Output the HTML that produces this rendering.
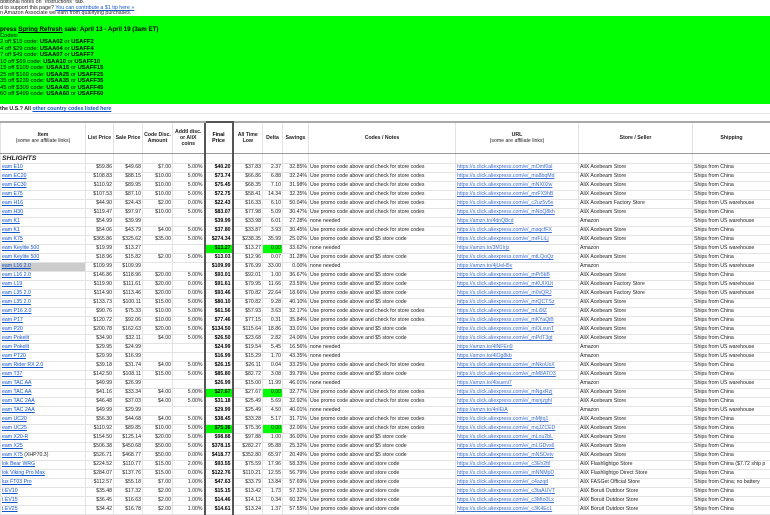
<!DOCTYPE html>
<html><head><meta charset="utf-8"><style>
*{margin:0;padding:0;box-sizing:border-box}
body{width:770px;height:515px;overflow:hidden;background:#fff;font-family:"Liberation Sans",Arial,sans-serif;color:#222;position:relative}
.t{position:absolute;left:0;font-size:5.3px;white-space:nowrap;line-height:6px}
a{color:#1155cc;text-decoration:underline}
#g{position:absolute;left:0;top:16px;width:770px;height:88px;background:#00ff00;font-size:5.8px;line-height:6.45px;color:#000}
#g div{white-space:nowrap}
.gr{position:absolute;left:0;width:770px;height:1px;background:#e3e3e3}
table{position:absolute;left:0;top:121px;border-collapse:collapse;table-layout:fixed;width:770px;font-size:5.2px}
td{border:1px solid #e3e3e3;height:9px;padding:0 1px;white-space:nowrap;overflow:hidden;line-height:7px}
tr.h td{height:31px;font-weight:bold;text-align:center;border-top:2px solid #aaa;border-bottom:1px solid #999;line-height:6px;white-space:normal}
tr.s td{height:10px;font-weight:bold;font-style:italic;font-size:6.8px}
td.r{text-align:right}
td.f{border-left:2px solid #555;border-right:2px solid #555;text-align:right;font-weight:bold;color:#000}
tr.h td.f{border-top:2px solid #555}
.gn{background:#00ff00}
.gy{background:#ccc}
td.u a{color:#3b6fd1}
.sm{font-weight:normal}
</style></head><body>
<div class="t" style="top:-1px">dditional notes on "Instructions" tab.</div>
<div class="t" style="top:5px">d to support this page? <a>You can contribute a $1 tip here »</a></div>
<div class="t" style="top:10px">n Amazon Associate we earn from qualifying purchases.</div>
<div id="g">
<div style="margin-top:10px;font-weight:bold;font-size:6.2px;line-height:7px">press <u>Spring Refresh</u> sale: April 13 - April 19 (3am ET)</div>
<div>Codes:</div>
<div>2 off $15 code: <b>USAA02</b> or <b>USAFF2</b></div>
<div>4 off $29 code: <b>USAA04</b> or <b>USAFF4</b></div>
<div>7 off $49 code: <b>USAA07</b> or <b>USAFF7</b></div>
<div>10 off $69 code: <b>USAA10</b> or <b>USAFF10</b></div>
<div>15 off $109 code: <b>USAA15</b> or <b>USAFF15</b></div>
<div>25 off $169 code: <b>USAA25</b> or <b>USAFF25</b></div>
<div>35 off $239 code: <b>USAA35</b> or <b>USAFF35</b></div>
<div>45 off $309 code: <b>USAA45</b> or <b>USAFF45</b></div>
<div>60 off $499 code: <b>USAA60</b> or <b>USAFF60</b></div>
</div>
<div class="t" style="top:106px;font-weight:bold">the U.S.? All <a>other country codes listed here</a></div>
<div class="gr" style="top:113px"></div>
<table>
<colgroup><col style="width:85px"><col style="width:28px"><col style="width:29px"><col style="width:30px"><col style="width:32px"><col style="width:28px"><col style="width:30px"><col style="width:20px"><col style="width:26px"><col style="width:147px"><col style="width:123px"><col style="width:114px"><col style="width:78px"></colgroup>
<tr class="h"><td>Item<br><span class="sm">(some are affiliate links)</span></td><td>List Price</td><td>Sale Price</td><td>Code Disc. Amount</td><td>Addtl disc. or AliX coins</td><td class="f">Final Price</td><td>All Time Low</td><td>Delta</td><td>Savings</td><td>Codes / Notes</td><td>URL<br><span class="sm">(some are affiliate links)</span></td><td>Store / Seller</td><td>Shipping</td></tr>
<tr class="s"><td>SHLIGHTS</td><td></td><td></td><td></td><td></td><td class="f"></td><td></td><td></td><td></td><td></td><td></td><td></td><td></td></tr>
<tr><td><a>eam E10</a></td><td class="r">$59.86</td><td class="r">$49.68</td><td class="r">$7.00</td><td class="r">5.00%</td><td class="f">$40.20</td><td class="r">$37.83</td><td class="r">2.37</td><td class="r">32.85%</td><td>Use promo code above and check for store codes</td><td class="u"><a>https://s.click.aliexpress.com/e/_mOmf0al</a></td><td>AliX Acebeam Store</td><td>Ships from China</td></tr>
<tr><td><a>eam EC20</a></td><td class="r">$108.83</td><td class="r">$88.15</td><td class="r">$10.00</td><td class="r">5.00%</td><td class="f">$73.74</td><td class="r">$66.86</td><td class="r">6.88</td><td class="r">32.24%</td><td>Use promo code above and check for store codes</td><td class="u"><a>https://s.click.aliexpress.com/e/_ma8bqMd</a></td><td>AliX Acebeam Store</td><td>Ships from China</td></tr>
<tr><td><a>eam EC30</a></td><td class="r">$110.92</td><td class="r">$89.95</td><td class="r">$10.00</td><td class="r">5.00%</td><td class="f">$75.45</td><td class="r">$68.35</td><td class="r">7.10</td><td class="r">31.98%</td><td>Use promo code above and check for store codes</td><td class="u"><a>https://s.click.aliexpress.com/e/_mNX02w</a></td><td>AliX Acebeam Store</td><td>Ships from China</td></tr>
<tr><td><a>eam E75</a></td><td class="r">$107.53</td><td class="r">$87.10</td><td class="r">$10.00</td><td class="r">5.00%</td><td class="f">$72.75</td><td class="r">$58.41</td><td class="r">14.34</td><td class="r">32.35%</td><td>Use promo code above and check for store codes</td><td class="u"><a>https://s.click.aliexpress.com/e/_mrFX9hB</a></td><td>AliX Acebeam Store</td><td>Ships from China</td></tr>
<tr><td><a>eam H16</a></td><td class="r">$44.90</td><td class="r">$24.43</td><td class="r">$2.00</td><td class="r">0.00%</td><td class="f">$22.43</td><td class="r">$16.33</td><td class="r">6.10</td><td class="r">50.04%</td><td>Use promo code above and check for store codes</td><td class="u"><a>https://s.click.aliexpress.com/e/_c2uz5v5x</a></td><td>AliX Acebeam Factory Store</td><td>Ships from US warehouse</td></tr>
<tr><td><a>eam H30</a></td><td class="r">$119.47</td><td class="r">$97.97</td><td class="r">$10.00</td><td class="r">5.00%</td><td class="f">$83.07</td><td class="r">$77.98</td><td class="r">5.09</td><td class="r">30.47%</td><td>Use promo code above and check for store codes</td><td class="u"><a>https://s.click.aliexpress.com/e/_mNoQ8kh</a></td><td>AliX Acebeam Store</td><td>Ships from China</td></tr>
<tr><td><a>eam K1</a></td><td class="r">$54.99</td><td class="r">$39.99</td><td></td><td></td><td class="f">$39.99</td><td class="r">$33.98</td><td class="r">6.01</td><td class="r">27.28%</td><td>none needed</td><td class="u"><a>https://amzn.to/4dnQ8cd</a></td><td>Amazon</td><td>Ships from US warehouse</td></tr>
<tr><td><a>eam K1</a></td><td class="r">$54.06</td><td class="r">$43.79</td><td class="r">$4.00</td><td class="r">5.00%</td><td class="f">$37.80</td><td class="r">$33.87</td><td class="r">3.93</td><td class="r">30.45%</td><td>Use promo code above and check for store codes</td><td class="u"><a>https://s.click.aliexpress.com/e/_msqcfFX</a></td><td>AliX Acebeam Store</td><td>Ships from China</td></tr>
<tr><td><a>eam K75</a></td><td class="r">$365.86</td><td class="r">$325.62</td><td class="r">$35.00</td><td class="r">5.00%</td><td class="f">$274.34</td><td class="r">$238.35</td><td class="r">35.99</td><td class="r">25.02%</td><td>Use promo code above and $5 store code</td><td class="u"><a>https://s.click.aliexpress.com/e/_mrFLiLj</a></td><td>AliX Acebeam Store</td><td>Ships from China</td></tr>
<tr><td><a>eam Keylite 500</a></td><td class="r">$19.99</td><td class="r">$13.27</td><td></td><td></td><td class="f gn">$13.27</td><td class="r">$13.27</td><td class="r gn">0.00</td><td class="r">33.62%</td><td>none needed</td><td class="u"><a>https://amzn.to/3M1Irjz</a></td><td>Amazon</td><td>Ships from US warehouse</td></tr>
<tr><td><a>eam Keylite 500</a></td><td class="r">$18.96</td><td class="r">$15.82</td><td class="r">$2.00</td><td class="r">5.00%</td><td class="f">$13.03</td><td class="r">$12.96</td><td class="r">0.07</td><td class="r">31.28%</td><td>Use promo code above and $5 store code</td><td class="u"><a>https://s.click.aliexpress.com/e/_mtLQoQz</a></td><td>AliX Acebeam Store</td><td>Ships from China</td></tr>
<tr><td class="gy"><a>eam L16 2.0</a></td><td class="r">$109.99</td><td class="r">$109.99</td><td></td><td></td><td class="f">$109.99</td><td class="r">$76.99</td><td class="r">33.00</td><td class="r">0.00%</td><td>none needed</td><td class="u"><a>https://amzn.to/4jUeH5v</a></td><td>Amazon</td><td>Ships from US warehouse</td></tr>
<tr><td><a>eam L16 2.0</a></td><td class="r">$146.86</td><td class="r">$118.96</td><td class="r">$20.00</td><td class="r">5.00%</td><td class="f">$93.01</td><td class="r">$92.01</td><td class="r">1.00</td><td class="r">36.67%</td><td>Use promo code above and $5 store code</td><td class="u"><a>https://s.click.aliexpress.com/e/_mPr5kB</a></td><td>AliX Acebeam Store</td><td>Ships from China</td></tr>
<tr><td><a>eam L19</a></td><td class="r">$119.90</td><td class="r">$111.61</td><td class="r">$20.00</td><td class="r">0.00%</td><td class="f">$91.61</td><td class="r">$79.95</td><td class="r">11.66</td><td class="r">23.59%</td><td>Use promo code above and $5 store code</td><td class="u"><a>https://s.click.aliexpress.com/e/_mKUIXUt</a></td><td>AliX Acebeam Factory Store</td><td>Ships from US warehouse</td></tr>
<tr><td><a>eam L35 2.0</a></td><td class="r">$114.90</td><td class="r">$113.46</td><td class="r">$20.00</td><td class="r">0.00%</td><td class="f">$93.46</td><td class="r">$70.82</td><td class="r">22.64</td><td class="r">18.66%</td><td>Use promo code above and $5 store code</td><td class="u"><a>https://s.click.aliexpress.com/e/_m0vQRJ</a></td><td>AliX Acebeam Factory Store</td><td>Ships from US warehouse</td></tr>
<tr><td><a>eam L35 2.0</a></td><td class="r">$133.73</td><td class="r">$100.11</td><td class="r">$15.00</td><td class="r">5.00%</td><td class="f">$80.10</td><td class="r">$70.82</td><td class="r">9.28</td><td class="r">40.10%</td><td>Use promo code above and $5 store code</td><td class="u"><a>https://s.click.aliexpress.com/e/_mrQCTSz</a></td><td>AliX Acebeam Store</td><td>Ships from China</td></tr>
<tr><td><a>eam P16 2.0</a></td><td class="r">$90.76</td><td class="r">$75.33</td><td class="r">$10.00</td><td class="r">5.00%</td><td class="f">$61.56</td><td class="r">$57.93</td><td class="r">3.63</td><td class="r">32.17%</td><td>Use promo code above and check for store codes</td><td class="u"><a>https://s.click.aliexpress.com/e/_mLi9lZ</a></td><td>AliX Acebeam Store</td><td>Ships from China</td></tr>
<tr><td><a>eam P17</a></td><td class="r">$120.72</td><td class="r">$92.06</td><td class="r">$10.00</td><td class="r">5.00%</td><td class="f">$77.46</td><td class="r">$77.15</td><td class="r">0.31</td><td class="r">35.84%</td><td>Use promo code above and check for store codes</td><td class="u"><a>https://s.click.aliexpress.com/e/_mKYaQiB</a></td><td>AliX Acebeam Store</td><td>Ships from China</td></tr>
<tr><td><a>eam P20</a></td><td class="r">$200.78</td><td class="r">$162.63</td><td class="r">$20.00</td><td class="r">5.00%</td><td class="f">$134.50</td><td class="r">$115.64</td><td class="r">18.86</td><td class="r">33.01%</td><td>Use promo code above and $5 store code</td><td class="u"><a>https://s.click.aliexpress.com/e/_mOLxunT</a></td><td>AliX Acebeam Store</td><td>Ships from China</td></tr>
<tr><td><a>eam Pokelit</a></td><td class="r">$34.90</td><td class="r">$32.11</td><td class="r">$4.00</td><td class="r">5.00%</td><td class="f">$26.50</td><td class="r">$23.68</td><td class="r">2.82</td><td class="r">24.06%</td><td>Use promo code above and $5 store code</td><td class="u"><a>https://s.click.aliexpress.com/e/_mPdT3gt</a></td><td>AliX Acebeam Store</td><td>Ships from China</td></tr>
<tr><td><a>eam Pokelit</a></td><td class="r">$29.95</td><td class="r">$24.99</td><td></td><td></td><td class="f">$24.99</td><td class="r">$19.54</td><td class="r">5.45</td><td class="r">16.56%</td><td>none needed</td><td class="u"><a>https://amzn.to/4lNFEn9</a></td><td>Amazon</td><td>Ships from US warehouse</td></tr>
<tr><td><a>eam PT20</a></td><td class="r">$29.99</td><td class="r">$16.99</td><td></td><td></td><td class="f">$16.99</td><td class="r">$15.29</td><td class="r">1.70</td><td class="r">43.35%</td><td>none needed</td><td class="u"><a>https://amzn.to/4lOg8kb</a></td><td>Amazon</td><td>Ships from US warehouse</td></tr>
<tr><td><a>eam Rider RX 2.0</a></td><td class="r">$39.18</td><td class="r">$31.74</td><td class="r">$4.00</td><td class="r">5.00%</td><td class="f">$26.15</td><td class="r">$26.11</td><td class="r">0.04</td><td class="r">33.25%</td><td>Use promo code above and check for store codes</td><td class="u"><a>https://s.click.aliexpress.com/e/_mNkoUsX</a></td><td>AliX Acebeam Store</td><td>Ships from China</td></tr>
<tr><td><a>eam T37</a></td><td class="r">$142.50</td><td class="r">$108.11</td><td class="r">$15.00</td><td class="r">5.00%</td><td class="f">$85.80</td><td class="r">$82.72</td><td class="r">3.08</td><td class="r">39.79%</td><td>Use promo code above and $5 store code</td><td class="u"><a>https://s.click.aliexpress.com/e/_mM8ATD3</a></td><td>AliX Acebeam Store</td><td>Ships from China</td></tr>
<tr><td><a>eam TAC AA</a></td><td class="r">$49.99</td><td class="r">$26.99</td><td></td><td></td><td class="f">$26.99</td><td class="r">$15.00</td><td class="r">11.99</td><td class="r">46.01%</td><td>none needed</td><td class="u"><a>https://amzn.to/4lsueni7</a></td><td>Amazon</td><td>Ships from US warehouse</td></tr>
<tr><td><a>eam TAC AA</a></td><td class="r">$41.16</td><td class="r">$33.34</td><td class="r">$4.00</td><td class="r">5.00%</td><td class="f gn">$27.67</td><td class="r">$27.67</td><td class="r gn">0.00</td><td class="r">32.77%</td><td>Use promo code above and check for store codes</td><td class="u"><a>https://s.click.aliexpress.com/e/_mNgxRzj</a></td><td>AliX Acebeam Store</td><td>Ships from China</td></tr>
<tr><td><a>eam TAC 2AA</a></td><td class="r">$46.48</td><td class="r">$37.03</td><td class="r">$4.00</td><td class="r">5.00%</td><td class="f">$31.18</td><td class="r">$25.49</td><td class="r">5.69</td><td class="r">32.92%</td><td>Use promo code above and check for store codes</td><td class="u"><a>https://s.click.aliexpress.com/e/_msnjzghl</a></td><td>AliX Acebeam Store</td><td>Ships from China</td></tr>
<tr><td><a>eam TAC 2AA</a></td><td class="r">$49.99</td><td class="r">$29.99</td><td></td><td></td><td class="f">$29.99</td><td class="r">$25.49</td><td class="r">4.50</td><td class="r">40.01%</td><td>none needed</td><td class="u"><a>https://amzn.to/4nIEiA</a></td><td>Amazon</td><td>Ships from US warehouse</td></tr>
<tr><td><a>eam UC20</a></td><td class="r">$56.30</td><td class="r">$44.68</td><td class="r">$4.00</td><td class="r">5.00%</td><td class="f">$38.45</td><td class="r">$33.28</td><td class="r">5.17</td><td class="r">31.71%</td><td>Use promo code above and check for store codes</td><td class="u"><a>https://s.click.aliexpress.com/e/_mMjtq1</a></td><td>AliX Acebeam Store</td><td>Ships from China</td></tr>
<tr><td><a>eam UC25</a></td><td class="r">$110.92</td><td class="r">$89.85</td><td class="r">$10.00</td><td class="r">5.00%</td><td class="f gn">$75.36</td><td class="r">$75.36</td><td class="r gn">0.00</td><td class="r">32.06%</td><td>Use promo code above and check for store codes</td><td class="u"><a>https://s.click.aliexpress.com/e/_mqJZCED</a></td><td>AliX Acebeam Store</td><td>Ships from China</td></tr>
<tr><td><a>eam X20-R</a></td><td class="r">$154.50</td><td class="r">$125.14</td><td class="r">$20.00</td><td class="r">5.00%</td><td class="f">$98.88</td><td class="r">$97.88</td><td class="r">1.00</td><td class="r">36.00%</td><td>Use promo code above and $5 store code</td><td class="u"><a>https://s.click.aliexpress.com/e/_mLou2bL</a></td><td>AliX Acebeam Store</td><td>Ships from China</td></tr>
<tr><td><a>eam X25</a></td><td class="r">$506.38</td><td class="r">$450.68</td><td class="r">$50.00</td><td class="r">5.00%</td><td class="f">$378.15</td><td class="r">$282.27</td><td class="r">95.88</td><td class="r">25.32%</td><td>Use promo code above and $5 store code</td><td class="u"><a>https://s.click.aliexpress.com/e/_mLGDvs6</a></td><td>AliX Acebeam Store</td><td>Ships from China</td></tr>
<tr><td><a>eam X75</a> (XHP70.3)</td><td class="r">$526.71</td><td class="r">$468.77</td><td class="r">$50.00</td><td class="r">0.00%</td><td class="f">$418.77</td><td class="r">$352.80</td><td class="r">65.97</td><td class="r">20.49%</td><td>Use promo code above and $5 store code</td><td class="u"><a>https://s.click.aliexpress.com/e/_mNSOeiv</a></td><td>AliX Acebeam Store</td><td>Ships from China</td></tr>
<tr><td><a>lok Bear WRG</a></td><td class="r">$224.52</td><td class="r">$110.77</td><td class="r">$15.00</td><td class="r">2.00%</td><td class="f">$93.55</td><td class="r">$75.59</td><td class="r">17.96</td><td class="r">58.33%</td><td>Use promo code above and store code</td><td class="u"><a>https://s.click.aliexpress.com/e/_c3Eh2ftl</a></td><td>AliX Flashlightgo Store</td><td>Ships from China ($7.72 ship p</td></tr>
<tr><td><a>lok Viking Pro Max</a></td><td class="r">$284.07</td><td class="r">$137.76</td><td class="r">$15.00</td><td class="r">0.00%</td><td class="f">$122.76</td><td class="r">$110.21</td><td class="r">12.55</td><td class="r">56.79%</td><td>Use promo code above and store code</td><td class="u"><a>https://s.click.aliexpress.com/e/_mNNMpD</a></td><td>AliX Flashlightgo Direct Store</td><td>Ships from China</td></tr>
<tr><td><a>lux FT03 Pro</a></td><td class="r">$112.57</td><td class="r">$55.18</td><td class="r">$7.00</td><td class="r">1.00%</td><td class="f">$47.63</td><td class="r">$33.79</td><td class="r">13.84</td><td class="r">57.69%</td><td>Use promo code above and store code</td><td class="u"><a>https://s.click.aliexpress.com/e/_c4azqd</a></td><td>AliX FASGet Official Store</td><td>Ships from China; no battery</td></tr>
<tr><td><a>t EV10</a></td><td class="r">$35.48</td><td class="r">$17.32</td><td class="r">$2.00</td><td class="r">1.00%</td><td class="f">$15.15</td><td class="r">$13.42</td><td class="r">1.73</td><td class="r">57.31%</td><td>Use promo code above and store code</td><td class="u"><a>https://s.click.aliexpress.com/e/_c3taAUVT</a></td><td>AliX Boruit Outdoor Store</td><td>Ships from China</td></tr>
<tr><td><a>t EV15</a></td><td class="r">$36.45</td><td class="r">$16.63</td><td class="r">$2.00</td><td class="r">1.00%</td><td class="f">$14.46</td><td class="r">$14.12</td><td class="r">0.34</td><td class="r">60.32%</td><td>Use promo code above and store code</td><td class="u"><a>https://s.click.aliexpress.com/e/_c3Mto0Lx</a></td><td>AliX Boruit Outdoor Store</td><td>Ships from China</td></tr>
<tr><td><a>t EV25</a></td><td class="r">$34.42</td><td class="r">$16.78</td><td class="r">$2.00</td><td class="r">1.00%</td><td class="f">$14.61</td><td class="r">$13.24</td><td class="r">1.37</td><td class="r">57.55%</td><td>Use promo code above and store code</td><td class="u"><a>https://s.click.aliexpress.com/e/_c3K4Ec1</a></td><td>AliX Boruit Outdoor Store</td><td>Ships from China</td></tr>
</table>
</body></html>
